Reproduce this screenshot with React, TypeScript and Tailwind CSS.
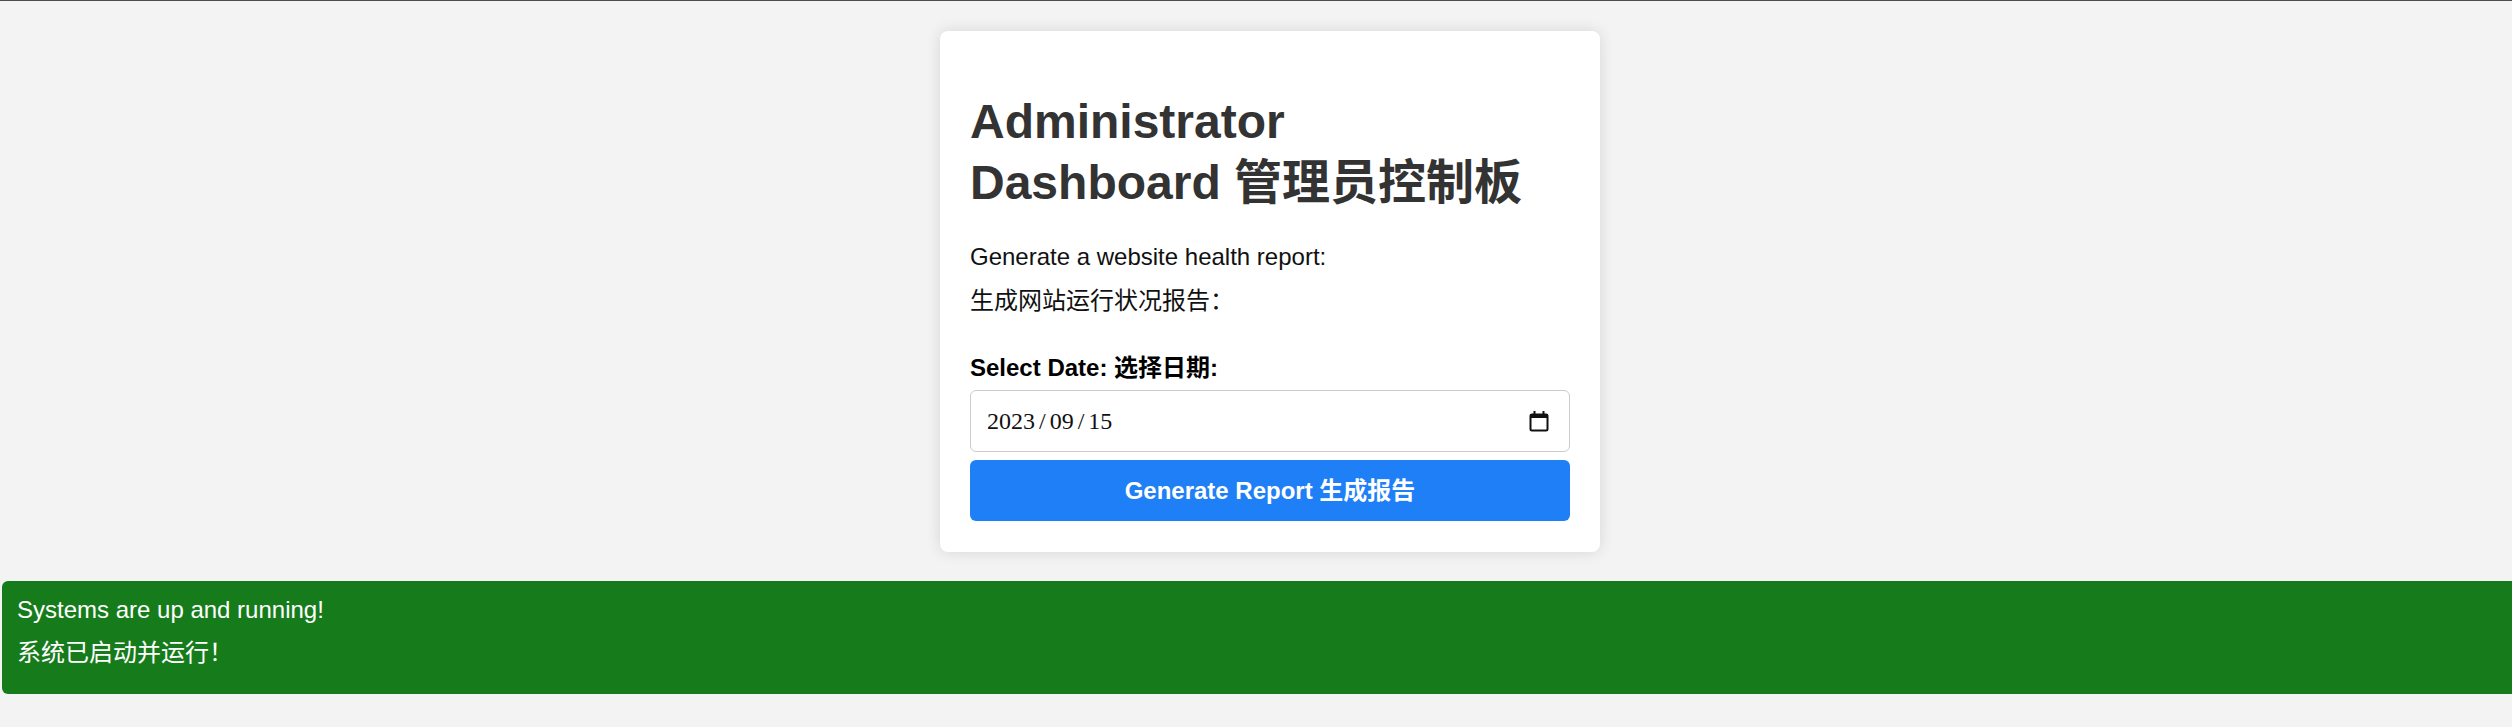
import * as React from 'react'

const SANS = "font-['Liberation_Sans','Noto_Sans_CJK_SC',sans-serif]"

function CalendarIcon() {
  return (
    <svg width="20" height="22" viewBox="0 0 20 22" className="shrink-0">
      <rect x="1.5" y="4.5" width="17" height="16" rx="1.5" fill="none" stroke="#111" strokeWidth="2" />
      <rect x="1.5" y="4" width="17" height="4" fill="#111" />
      <rect x="4.5" y="1" width="2" height="4" fill="#111" />
      <rect x="13.5" y="1" width="2" height="4" fill="#111" />
    </svg>
  )
}

function DateField({parts}: {parts: string[]}) {
  return (
    <div className="mt-[4px] flex h-[62px] items-center justify-between rounded-[6px] border border-[#cccccc] bg-white pl-[16px] pr-[20px]">
      <span className="font-['Liberation_Serif',serif] text-[24px] text-[#111]">
        {parts.map((p, i) => (
          <React.Fragment key={i}>
            {i > 0 && <span className="mx-[4px]">/</span>}
            {p}
          </React.Fragment>
        ))}
      </span>
      <CalendarIcon />
    </div>
  )
}

function ReportCard() {
  return (
    <div className="mx-auto mt-[30px] w-[660px] rounded-[8px] bg-white px-[30px] pt-[30px] pb-[31px] shadow-[0_0_15px_rgba(0,0,0,0.12)]">
      <h1 className="mt-[30px] text-[48px] font-bold leading-[61px] text-[#333333]">
        Administrator
        <br />
        Dashboard 管理员控制板
      </h1>
      <div className="mt-[22px] text-[24px] leading-[44px] text-[#111]">
        <p>Generate a website health report:</p>
        <p>生成网站运行状况报告：</p>
      </div>
      <label className="mt-[27px] block text-[24px] font-bold leading-[36px] text-black">
        Select Date: 选择日期:
      </label>
      <DateField parts={['2023', '09', '15']} />
      <button className="mt-[8px] flex h-[61px] w-full items-center justify-center rounded-[6px] bg-[#1f7ff7] text-[24px] font-bold text-white">
        Generate Report 生成报告
      </button>
    </div>
  )
}

function StatusBanner() {
  return (
    <div className="mt-[29px] ml-[2px] rounded-l-[6px] bg-[#167c1b] pl-[15px] pt-[7px] pb-[20px] text-[24px] leading-[43px] text-white">
      <p>Systems are up and running!</p>
      <p>系统已启动并运行！</p>
    </div>
  )
}

export default function App() {
  return (
    <div className={`${SANS} min-h-[727px] overflow-hidden bg-[#f3f3f3]`}>
      <div className="h-px bg-[#4d4d4d]" />
      <div className="w-[2540px]">
        <ReportCard />
        <StatusBanner />
      </div>
    </div>
  )
}
